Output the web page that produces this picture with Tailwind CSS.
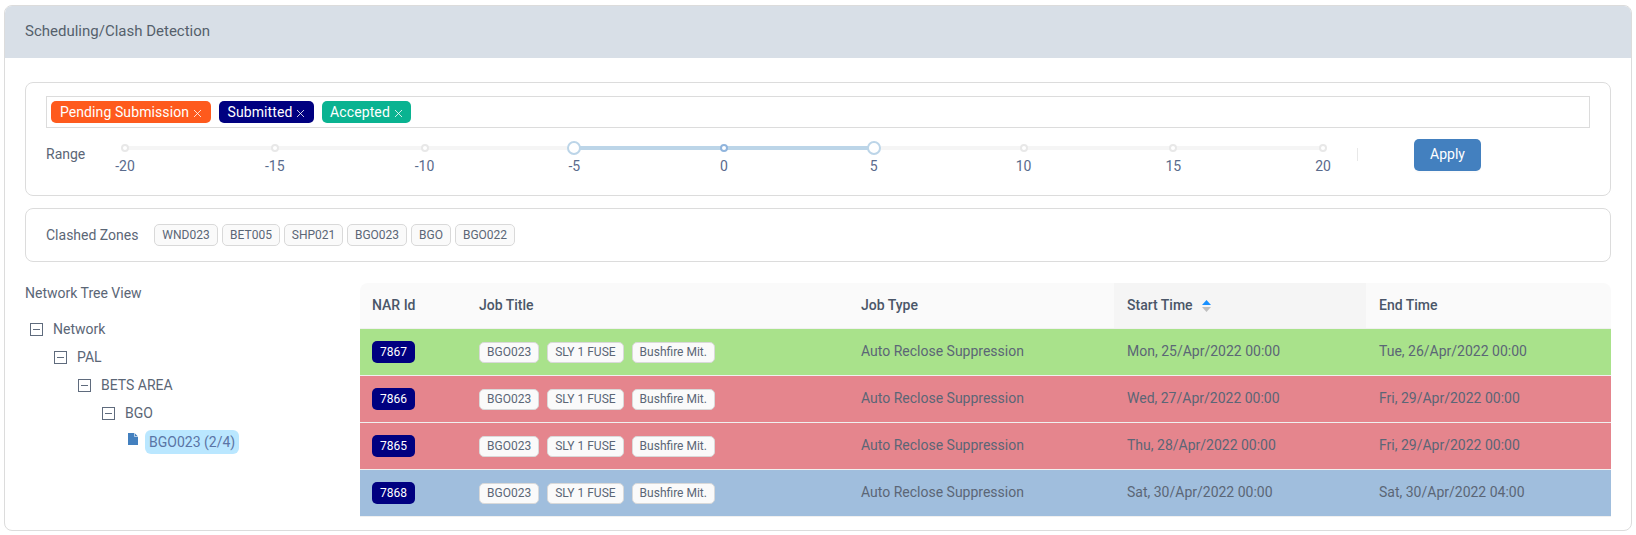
<!DOCTYPE html>
<html lang="en">
<head>
  <meta charset="UTF-8" />
  <title>Scheduling/Clash Detection</title>
  <script src="https://cdn.jsdelivr.net/npm/@tailwindcss/browser@4"></script>
</head>
<body class="bg-white text-[#5b6676] font-['Roboto',sans-serif] text-[14px] overflow-hidden">
  <div class="pt-[5px] pl-[4px] pr-[4px] h-[535px]">
    <section class="h-[526px] border border-[#dcdcdc] rounded-[8px] overflow-hidden">
      <header class="h-[52px] bg-[#d8dfe7] flex items-center pl-[20px] pb-[1px] text-[15px] text-[#555f6c]">Scheduling/Clash Detection</header>

      <div class="px-[20px] pt-[24px]">
        <!-- filter card -->
        <div class="h-[114px] border border-[#dcdcdc] rounded-[8px] pt-[13px] pl-[20px] pr-[20px]">
          <div class="h-[32px] border border-[#dcdcdc] flex items-center gap-[8px] pl-[4px]">
            <span class="h-[22px] w-[160px] rounded-[5px] bg-[#fe5a1d] text-white tracking-[0.1px] flex items-center justify-center gap-[4px]">Pending Submission
              <svg class="w-[9px] h-[9px] mt-[2px]" viewBox="0 0 9 9" fill="none" stroke="#fff" stroke-opacity="0.8"><path d="M1 1l7 7M8 1l-7 7"/></svg></span>
            <span class="h-[22px] w-[95px] rounded-[5px] bg-[#000080] text-white tracking-[0.1px] flex items-center justify-center gap-[4px]">Submitted
              <svg class="w-[9px] h-[9px] mt-[2px]" viewBox="0 0 9 9" fill="none" stroke="#fff" stroke-opacity="0.8"><path d="M1 1l7 7M8 1l-7 7"/></svg></span>
            <span class="h-[22px] w-[89px] rounded-[5px] bg-[#0ab391] text-white tracking-[0.1px] flex items-center justify-center gap-[4px]">Accepted
              <svg class="w-[9px] h-[9px] mt-[2px]" viewBox="0 0 9 9" fill="none" stroke="#fff" stroke-opacity="0.8"><path d="M1 1l7 7M8 1l-7 7"/></svg></span>
          </div>
          <div class="flex mt-[11px]">
            <span class="w-[79px] mt-[5px] leading-[20px]">Range</span>
            <div class="relative w-[1198px] h-[40px]">
              <div class="absolute left-0 right-0 top-[7px] h-[4px] bg-[#f5f5f5] rounded-full"></div>
              <div class="absolute left-[450px] w-[299px] top-[7px] h-[4px] bg-[#bcd5e8]"></div>
              <div class="absolute inset-0 flex justify-between text-[#5a6b8c]">
                <div class="w-0 flex flex-col items-center"><i class="block shrink-0 w-[8px] h-[8px] mt-[5px] rounded-full bg-white border-2 border-[#e8e8e8]"></i><span class="mt-[4px] leading-[20px] whitespace-nowrap">-20</span></div>
                <div class="w-0 flex flex-col items-center"><i class="block shrink-0 w-[8px] h-[8px] mt-[5px] rounded-full bg-white border-2 border-[#e8e8e8]"></i><span class="mt-[4px] leading-[20px] whitespace-nowrap">-15</span></div>
                <div class="w-0 flex flex-col items-center"><i class="block shrink-0 w-[8px] h-[8px] mt-[5px] rounded-full bg-white border-2 border-[#e8e8e8]"></i><span class="mt-[4px] leading-[20px] whitespace-nowrap">-10</span></div>
                <div class="w-0 flex flex-col items-center"><i class="block shrink-0 w-[14px] h-[14px] mt-[2px] rounded-full bg-white border-2 border-[#bcd5e8]"></i><span class="mt-[1px] leading-[20px] whitespace-nowrap">-5</span></div>
                <div class="w-0 flex flex-col items-center"><i class="block shrink-0 w-[8px] h-[8px] mt-[5px] rounded-full bg-white border-2 border-[#91b5dd]"></i><span class="mt-[4px] leading-[20px] whitespace-nowrap">0</span></div>
                <div class="w-0 flex flex-col items-center"><i class="block shrink-0 w-[14px] h-[14px] mt-[2px] rounded-full bg-white border-2 border-[#bcd5e8]"></i><span class="mt-[1px] leading-[20px] whitespace-nowrap">5</span></div>
                <div class="w-0 flex flex-col items-center"><i class="block shrink-0 w-[8px] h-[8px] mt-[5px] rounded-full bg-white border-2 border-[#e8e8e8]"></i><span class="mt-[4px] leading-[20px] whitespace-nowrap">10</span></div>
                <div class="w-0 flex flex-col items-center"><i class="block shrink-0 w-[8px] h-[8px] mt-[5px] rounded-full bg-white border-2 border-[#e8e8e8]"></i><span class="mt-[4px] leading-[20px] whitespace-nowrap">15</span></div>
                <div class="w-0 flex flex-col items-center"><i class="block shrink-0 w-[8px] h-[8px] mt-[5px] rounded-full bg-white border-2 border-[#e8e8e8]"></i><span class="mt-[4px] leading-[20px] whitespace-nowrap">20</span></div>
              </div>
            </div>
            <div class="w-px h-[13px] bg-[#e8e8e8] ml-[34px] mt-[9px]"></div>
            <button class="ml-[56px] w-[67px] h-[32px] pb-[1px] rounded-[5px] bg-[#4380bf] text-white shadow-[0_2px_0_rgba(0,0,0,0.015)]">Apply</button>
          </div>
        </div>

        <!-- clashed zones -->
        <div class="h-[54px] mt-[12px] border border-[#dcdcdc] rounded-[8px] flex items-center pl-[20px]">
          <span class="w-[108px]">Clashed Zones</span>
          <div class="flex gap-[4px]">
            <span class="h-[22px] w-[64px] rounded-[5px] border border-[#d9d9d9] bg-[#fafafa] text-[12px] flex items-center justify-center">WND023</span>
            <span class="h-[22px] w-[58px] rounded-[5px] border border-[#d9d9d9] bg-[#fafafa] text-[12px] flex items-center justify-center">BET005</span>
            <span class="h-[22px] w-[59px] rounded-[5px] border border-[#d9d9d9] bg-[#fafafa] text-[12px] flex items-center justify-center">SHP021</span>
            <span class="h-[22px] w-[60px] rounded-[5px] border border-[#d9d9d9] bg-[#fafafa] text-[12px] flex items-center justify-center">BGO023</span>
            <span class="h-[22px] w-[40px] rounded-[5px] border border-[#d9d9d9] bg-[#fafafa] text-[12px] flex items-center justify-center">BGO</span>
            <span class="h-[22px] w-[60px] rounded-[5px] border border-[#d9d9d9] bg-[#fafafa] text-[12px] flex items-center justify-center">BGO022</span>
          </div>
        </div>

        <div class="flex mt-[21px]">
          <!-- tree -->
          <div class="w-[335px] shrink-0">
            <div class="h-[20px] leading-[20px]">Network Tree View</div>
            <ul class="mt-[12px]">
              <li class="h-[28px] flex items-center pl-[5px]"><span class="w-[13px] h-[13px] border-[1.5px] border-[#5f6b7d] flex items-center justify-center mt-[1px]"><i class="block w-[7px] h-[1.5px] bg-[#5f6b7d]"></i></span><span class="ml-[10px]">Network</span></li>
              <li class="h-[28px] flex items-center pl-[29px]"><span class="w-[13px] h-[13px] border-[1.5px] border-[#5f6b7d] flex items-center justify-center mt-[1px]"><i class="block w-[7px] h-[1.5px] bg-[#5f6b7d]"></i></span><span class="ml-[10px]">PAL</span></li>
              <li class="h-[28px] flex items-center pl-[53px]"><span class="w-[13px] h-[13px] border-[1.5px] border-[#5f6b7d] flex items-center justify-center mt-[1px]"><i class="block w-[7px] h-[1.5px] bg-[#5f6b7d]"></i></span><span class="ml-[10px]">BETS AREA</span></li>
              <li class="h-[28px] flex items-center pl-[77px]"><span class="w-[13px] h-[13px] border-[1.5px] border-[#5f6b7d] flex items-center justify-center mt-[1px]"><i class="block w-[7px] h-[1.5px] bg-[#5f6b7d]"></i></span><span class="ml-[10px]">BGO</span></li>
              <li class="h-[28px] flex items-center pl-[103px]">
                <svg class="w-[10px] h-[12px] -mt-[5px]" viewBox="0 0 10 12"><path d="M0 0h6.5L10 3.5V12H0z" fill="#4380bf"/><path d="M6.5 0v3.5H10" fill="none" stroke="#fff" stroke-width="0.6"/></svg>
                <span class="ml-[7px] h-[24px] px-[4px] rounded-[6px] bg-[#bae7ff] text-[#5a75a5] leading-[24px] mt-[2px]">BGO023 (2/4)</span>
              </li>
            </ul>
          </div>

          <!-- table -->
          <table class="w-[1251px] table-fixed border-separate border-spacing-0 self-start">
            <colgroup>
              <col class="w-[107px]" /><col class="w-[382px]" /><col class="w-[265px]" /><col class="w-[252px]" /><col class="w-[245px]" />
            </colgroup>
            <thead>
              <tr class="h-[46px] bg-[#fafafa] text-left text-[#4a5668]">
                <th class="font-medium pl-[12px] rounded-tl-[8px] border-b border-[#f0f0f0]">NAR Id</th>
                <th class="font-medium pl-[12px] border-b border-[#f0f0f0]">Job Title</th>
                <th class="font-medium pl-[12px] border-b border-[#f0f0f0]">Job Type</th>
                <th class="font-medium pl-[13px] bg-[#f5f5f5] border-b border-[#f0f0f0]"><span class="inline-flex items-center gap-[9px]">Start Time
                  <svg class="w-[9px] h-[12px]" viewBox="0 0 9 12"><path d="M4.5 0L9 5H0z" fill="#1890ff"/><path d="M4.5 12L0 7h9z" fill="#bfbfbf"/></svg></span></th>
                <th class="font-medium pl-[13px] rounded-tr-[8px] border-b border-[#f0f0f0]">End Time</th>
              </tr>
            </thead>
            <tbody>
              <tr class="h-[47px] bg-[#a9e28b]">
                <td class="border-b border-[#f0f0f0] pl-[12px]"><span class="inline-flex w-[43px] h-[22px] rounded-[5px] bg-[#000080] text-white text-[12px] items-center justify-center align-middle">7867</span></td>
                <td class="border-b border-[#f0f0f0] pl-[12px]"><div class="flex gap-[8px]"><span class="h-[21px] px-[7px] rounded-[5px] border border-[#d9d9d9] bg-[#fafafa] text-[12px] flex items-center">BGO023</span><span class="h-[21px] px-[7px] rounded-[5px] border border-[#d9d9d9] bg-[#fafafa] text-[12px] flex items-center">SLY 1 FUSE</span><span class="h-[21px] px-[7px] rounded-[5px] border border-[#d9d9d9] bg-[#fafafa] text-[12px] flex items-center">Bushfire Mit.</span></div></td>
                <td class="border-b border-[#f0f0f0] pl-[12px] pb-[1px]">Auto Reclose Suppression</td>
                <td class="border-b border-[#f0f0f0] pl-[13px] pb-[1px]">Mon, 25/Apr/2022 00:00</td>
                <td class="border-b border-[#f0f0f0] pl-[13px] pb-[1px]">Tue, 26/Apr/2022 00:00</td>
              </tr>
              <tr class="h-[47px] bg-[#e5858d]">
                <td class="border-b border-[#f0f0f0] pl-[12px]"><span class="inline-flex w-[43px] h-[22px] rounded-[5px] bg-[#000080] text-white text-[12px] items-center justify-center align-middle">7866</span></td>
                <td class="border-b border-[#f0f0f0] pl-[12px]"><div class="flex gap-[8px]"><span class="h-[21px] px-[7px] rounded-[5px] border border-[#d9d9d9] bg-[#fafafa] text-[12px] flex items-center">BGO023</span><span class="h-[21px] px-[7px] rounded-[5px] border border-[#d9d9d9] bg-[#fafafa] text-[12px] flex items-center">SLY 1 FUSE</span><span class="h-[21px] px-[7px] rounded-[5px] border border-[#d9d9d9] bg-[#fafafa] text-[12px] flex items-center">Bushfire Mit.</span></div></td>
                <td class="border-b border-[#f0f0f0] pl-[12px] pb-[1px]">Auto Reclose Suppression</td>
                <td class="border-b border-[#f0f0f0] pl-[13px] pb-[1px]">Wed, 27/Apr/2022 00:00</td>
                <td class="border-b border-[#f0f0f0] pl-[13px] pb-[1px]">Fri, 29/Apr/2022 00:00</td>
              </tr>
              <tr class="h-[47px] bg-[#e5858d]">
                <td class="border-b border-[#f0f0f0] pl-[12px]"><span class="inline-flex w-[43px] h-[22px] rounded-[5px] bg-[#000080] text-white text-[12px] items-center justify-center align-middle">7865</span></td>
                <td class="border-b border-[#f0f0f0] pl-[12px]"><div class="flex gap-[8px]"><span class="h-[21px] px-[7px] rounded-[5px] border border-[#d9d9d9] bg-[#fafafa] text-[12px] flex items-center">BGO023</span><span class="h-[21px] px-[7px] rounded-[5px] border border-[#d9d9d9] bg-[#fafafa] text-[12px] flex items-center">SLY 1 FUSE</span><span class="h-[21px] px-[7px] rounded-[5px] border border-[#d9d9d9] bg-[#fafafa] text-[12px] flex items-center">Bushfire Mit.</span></div></td>
                <td class="border-b border-[#f0f0f0] pl-[12px] pb-[1px]">Auto Reclose Suppression</td>
                <td class="border-b border-[#f0f0f0] pl-[13px] pb-[1px]">Thu, 28/Apr/2022 00:00</td>
                <td class="border-b border-[#f0f0f0] pl-[13px] pb-[1px]">Fri, 29/Apr/2022 00:00</td>
              </tr>
              <tr class="h-[47px] bg-[#a0bedd]">
                <td class="border-b border-[#f0f0f0] pl-[12px]"><span class="inline-flex w-[43px] h-[22px] rounded-[5px] bg-[#000080] text-white text-[12px] items-center justify-center align-middle">7868</span></td>
                <td class="border-b border-[#f0f0f0] pl-[12px]"><div class="flex gap-[8px]"><span class="h-[21px] px-[7px] rounded-[5px] border border-[#d9d9d9] bg-[#fafafa] text-[12px] flex items-center">BGO023</span><span class="h-[21px] px-[7px] rounded-[5px] border border-[#d9d9d9] bg-[#fafafa] text-[12px] flex items-center">SLY 1 FUSE</span><span class="h-[21px] px-[7px] rounded-[5px] border border-[#d9d9d9] bg-[#fafafa] text-[12px] flex items-center">Bushfire Mit.</span></div></td>
                <td class="border-b border-[#f0f0f0] pl-[12px] pb-[1px]">Auto Reclose Suppression</td>
                <td class="border-b border-[#f0f0f0] pl-[13px] pb-[1px]">Sat, 30/Apr/2022 00:00</td>
                <td class="border-b border-[#f0f0f0] pl-[13px] pb-[1px]">Sat, 30/Apr/2022 04:00</td>
              </tr>
            </tbody>
          </table>
        </div>
      </div>
    </section>
  </div>
</body>
</html>
